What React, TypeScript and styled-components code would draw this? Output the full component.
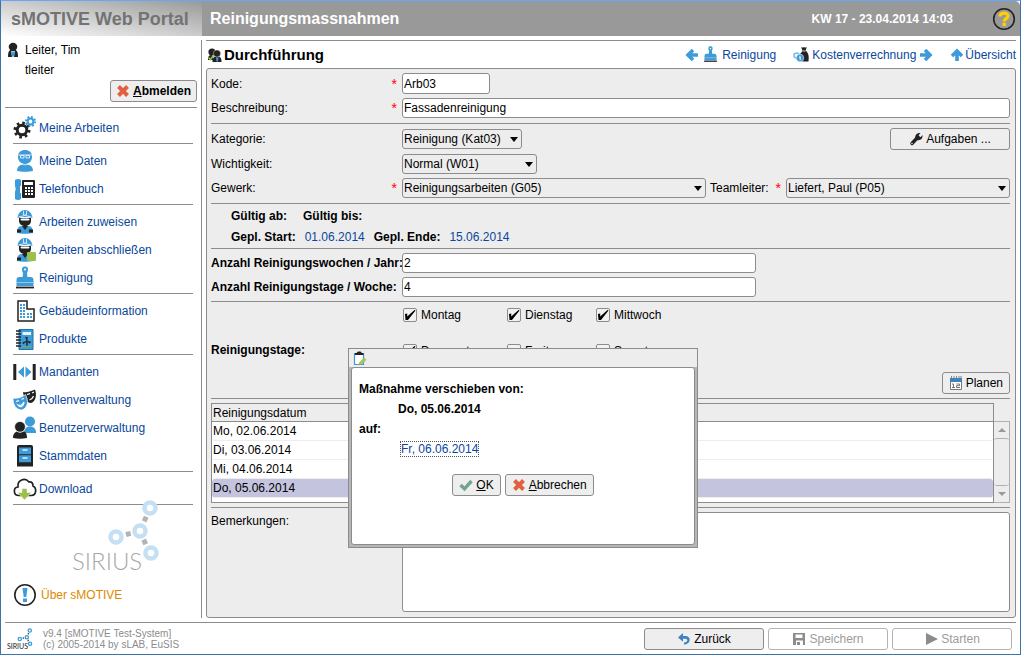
import React from "react";
import styled, { createGlobalStyle } from "styled-components";

const line = "#8c8c8c";
const blue = "#3c9bd8";
const dark = "#222222";
const linkBlue = "#0a479c";

const Global = createGlobalStyle`
  *, *::before, *::after { box-sizing: border-box; }
  body { margin: 0; background: #fff; }
  body, button, input, select, textarea {
    font-family: "Liberation Sans", Arial, sans-serif;
    font-size: 12px;
    color: #000;
  }
`;

/* ---------- shell ---------- */
const Window = styled.div`
  display: flex;
  flex-direction: column;
  min-height: 100vh;
  border: 1px solid #3b73ab;
  border-top-color: #63a8fa;
`;

const Header = styled.header`
  display: flex;
  align-items: center;
  height: 35px;
  background: #999;
  border-radius: 0 5px 0 0;
`;

const Brand = styled.div`
  width: 201px;
  height: 35px;
  padding-left: 10px;
  line-height: 36px;
  font-size: 18px;
  font-weight: bold;
  color: #737373;
  background: linear-gradient(10deg, #fff 0%, #f0f0f0 15%, #999 100%);
`;

const PageTitle = styled.h1`
  flex: 1;
  margin: 0;
  padding-left: 8px;
  font-size: 16px;
  color: #fff;
`;

const Clock = styled.div`
  margin-right: 39px;
  font-weight: bold;
  color: #fff;
`;

const HelpButton = styled.button`
  display: flex;
  margin-right: 4px;
  padding: 0;
  border: 0;
  background: none;
`;

const Body = styled.div`
  display: flex;
  flex: 1;
  padding-top: 4px;
`;

/* ---------- sidebar ---------- */
const Sidebar = styled.aside`
  display: flex;
  flex-direction: column;
  width: 201px;
  padding: 0 4px;
  border-right: 1px solid ${line};
`;

const UserBox = styled.div`
  height: 68px;
  border-bottom: 1px solid ${line};
`;

const UserRow = styled.div`
  display: flex;
  align-items: center;
  gap: 5px;
  height: 20px;
  padding-left: 2px;
  & + & { margin-bottom: -1px; }
`;

const LogoutRow = styled.div`
  display: flex;
  justify-content: flex-end;
  padding-top: 1px;
`;

const Nav = styled.nav`
  padding: 6px 4px 0 8px;
`;

const NavGroup = styled.div`
  padding-bottom: 1px;
  margin-bottom: 3px;
  border-bottom: 1px solid ${line};
`;

const NavItem = styled.a`
  display: flex;
  align-items: center;
  gap: 2px;
  height: 28px;
  color: ${linkBlue};
  text-decoration: none;
`;

const LogoArea = styled.div`
  margin: -10px 0 0 64px;
  height: 83px;
`;

const AboutLink = styled.a`
  display: flex;
  align-items: center;
  gap: 4px;
  margin: 0 0 8px 8px;
  height: 28px;
  color: #dd8800;
  text-decoration: none;
`;

/* ---------- main ---------- */
const Main = styled.main`
  display: flex;
  flex-direction: column;
  flex: 1;
  min-width: 0;
  padding: 0 4px;
`;

const TitleBar = styled.div`
  display: flex;
  align-items: center;
  height: 28px;
  border-top: 1px solid ${line};
`;

const SectionTitle = styled.h2`
  display: flex;
  align-items: center;
  gap: 2px;
  flex: 1;
  margin: 0;
  padding-left: 1px;
  font-size: 15px;
`;

const TopLink = styled.a<{ $gap?: number }>`
  display: flex;
  align-items: center;
  gap: ${(p) => p.$gap ?? 3}px;
  margin-left: 17px;
  color: ${linkBlue};
  text-decoration: none;
`;

const Panel = styled.section`
  display: flex;
  flex-direction: column;
  flex: 1;
  padding: 4px 5px 5px 4px;
  border: 1px solid ${line};
  border-radius: 3px;
  background: #ededed;
`;

const Group = styled.div<{ $pad?: number }>`
  display: flex;
  flex-direction: column;
  gap: 4px;
  padding-bottom: ${(p) => p.$pad ?? 4}px;
  margin-bottom: 4px;
  border-bottom: 1px solid ${line};
`;

const Row = styled.div`
  display: flex;
  align-items: center;
  min-height: 20px;
`;

const FieldLabel = styled.label<{ $bold?: boolean }>`
  display: flex;
  justify-content: space-between;
  align-items: center;
  flex: none;
  width: 191px;
  height: 20px;
  padding-right: 5px;
  white-space: nowrap;
  font-weight: ${(p) => (p.$bold ? "bold" : "normal")};
`;

const Required = styled.span`
  color: #f00;
  font-size: 14px;
  line-height: 14px;
`;

const TeamLabel = styled.label`
  display: flex;
  justify-content: space-between;
  align-items: center;
  flex: none;
  width: 80px;
  height: 20px;
  padding: 0 5px 0 4px;
`;

const TextInput = styled.input<{ $width?: string; $tall?: boolean }>`
  width: ${(p) => p.$width ?? "100%"};
  height: ${(p) => (p.$tall ? 21 : 20)}px;
  padding: 0 1px;
  border: 1px solid ${line};
  border-radius: 3px;
  background: #fff;
`;

const SelectBox = styled.span<{ $width?: number; $grow?: number }>`
  position: relative;
  flex: ${(p) => (p.$grow ? `${p.$grow} 1 0` : "none")};
  width: ${(p) => (p.$width ? `${p.$width}px` : "auto")};
  height: 20px;
  &::after {
    content: "";
    position: absolute;
    right: 4px;
    top: 8px;
    border: 4px solid transparent;
    border-top: 5px solid #000;
    border-bottom: 0;
    pointer-events: none;
  }
  select {
    appearance: none;
    width: 100%;
    height: 20px;
    padding: 0 1px;
    border: 1px solid ${line};
    border-radius: 3px;
    background: #ededed;
  }
`;

const Button = styled.button<{ $width?: number; $bold?: boolean; $gap?: number }>`
  display: inline-flex;
  align-items: center;
  justify-content: center;
  gap: ${(p) => p.$gap ?? 3}px;
  width: ${(p) => (p.$width ? `${p.$width}px` : "auto")};
  height: 22px;
  padding: 0 ${(p) => (p.$bold ? 5 : 6)}px;
  border: 1px solid ${line};
  border-radius: 3px;
  background: #eee;
  font-weight: ${(p) => (p.$bold ? "bold" : "normal")};
  white-space: nowrap;
  &:disabled {
    border-color: #b4b4b4;
    background: #fff;
    color: #9c9c9c;
  }
`;

const Spacer = styled.div`
  flex: 1;
`;

const Dates = styled.div`
  display: flex;
  flex-direction: column;
  gap: 1px;
  margin-top: -2px;
  padding-left: 20px;
`;

const DateLine = styled.div<{ $gap: number }>`
  display: flex;
  gap: ${(p) => p.$gap}px;
  height: 20px;
  line-height: 20px;
  font-weight: bold;
`;

const DateLink = styled.a`
  color: ${linkBlue};
  font-weight: normal;
  text-decoration: none;
`;

const DaysRow = styled.div`
  display: flex;
  align-items: center;
  height: 88px;
`;

const Days = styled.div`
  display: grid;
  grid-template-columns: 104px 89px auto;
  row-gap: 22px;
  align-self: flex-start;
  padding-top: 2px;
`;

const DayLabel = styled.label`
  display: flex;
  align-items: center;
  gap: 4px;
  height: 14px;
  padding-left: 1px;
`;

const Check = styled.input`
  appearance: none;
  width: 14px;
  height: 14px;
  margin: 0;
  border: 1px solid ${line};
  border-radius: 2px;
  background: #f2f2f2;
  &:checked {
    background: #f2f2f2
      url("data:image/svg+xml,%3Csvg xmlns='http://www.w3.org/2000/svg' viewBox='0 0 12 12'%3E%3Cpath d='M1 5L3.200 4.500v3L10.500 1l1 .6L4 11H1.500z' fill='black'/%3E%3C/svg%3E");
  }
`;

const PlanCell = styled.div`
  display: flex;
  align-self: flex-end;
  margin-left: auto;
`;

const TableArea = styled.div`
  display: flex;
  height: 100px;
`;

const TableFrame = styled.div`
  flex: 1;
  border: 1px solid ${line};
  background: #fff;
`;

const Table = styled.table`
  width: 100%;
  border-collapse: separate;
  border-spacing: 0;
  th {
    height: 18px;
    padding: 0 1px;
    text-align: left;
    font-weight: normal;
    background: #ededed;
    border-bottom: 1px solid ${line};
  }
  td {
    height: 19px;
    padding: 0 1px;
    border-bottom: 1px solid #ededed;
  }
`;

const DataRow = styled.tr<{ $selected?: boolean }>`
  td {
    background: ${(p) => (p.$selected ? "#c5c4de" : "#fff")};
    border-radius: 3px;
  }
`;

const Scroll = styled.div`
  display: flex;
  flex-direction: column;
  justify-content: space-between;
  width: 16px;
  height: 82px;
  margin-top: 18px;
  border: 1px solid #b0b0b0;
  border-left: 0;
`;

const ScrollButton = styled.button<{ $down?: boolean }>`
  height: 16px;
  padding: 0;
  border: 0;
  background: none;
  &::after {
    content: "";
    display: block;
    width: 8px;
    margin: 0 auto;
    border: 4px solid transparent;
    border-top-width: ${(p) => (p.$down ? 4 : 0)}px;
    border-bottom-width: ${(p) => (p.$down ? 0 : 4)}px;
    border-top-color: #999;
    border-bottom-color: #999;
  }
`;

const Thumb = styled.div`
  flex: 1;
  border: solid #b0b0b0;
  border-width: 1px 0;
  border-radius: 3px;
`;

const NotesRow = styled.div`
  display: flex;
  flex: 1;
  label {
    width: 191px;
    padding-top: 2px;
  }
  textarea {
    flex: 1;
    min-height: 100px;
    border: 1px solid ${line};
    border-radius: 3px;
    resize: none;
  }
`;

/* ---------- footer ---------- */
const Footer = styled.footer`
  display: flex;
  align-items: center;
  gap: 4px;
  margin: 4px 4px 0;
  padding: 0 4px 0 1px;
  height: 32px;
  border-top: 1px solid ${line};
`;

const Version = styled.div`
  flex: 1;
  padding-left: 6px;
  font-size: 10px;
  line-height: 11px;
  color: #8c8c8c;
`;

/* ---------- dialog ---------- */
const Dialog = styled.dialog`
  position: absolute;
  left: 348px;
  top: 348px;
  width: 350px;
  margin: 0;
  padding: 0;
  color: #000;
  border: 1px solid ${line};
  background: #b6b6b6;
`;

const DialogTitle = styled.div`
  height: 18px;
  padding: 2px 4px;
  background: #ededed;
`;

const DialogBody = styled.div`
  height: 178px;
  margin: 0 2px 2px;
  padding: 11px 7px;
  border: 1px solid ${line};
  border-radius: 3px;
  background: #fff;
  font-weight: bold;
  line-height: 20px;
`;

const Indent = styled.div`
  padding-left: 39px;
`;

const FocusLink = styled.a`
  margin-left: 3px;
  outline: 1px dotted #555;
  color: ${linkBlue};
  font-weight: normal;
  line-height: 14px;
  text-decoration: none;
`;

const DialogButtons = styled.div`
  display: flex;
  justify-content: center;
  gap: 4px;
  margin-top: 15px;
`;

/* ---------- icons ---------- */
type SvgProps = { w?: number; h?: number; box?: string; children?: React.ReactNode };

const Svg = ({ w = 24, h = 24, box, children }: SvgProps) => (
  <svg width={w} height={h} viewBox={box ?? `0 0 ${w} ${h}`} fill="none" aria-hidden="true">
    {children}
  </svg>
);

const Gears = () => (
  <Svg>
    <circle cx="9" cy="14" r="4.8" stroke={dark} strokeWidth="3" />
    <circle cx="9" cy="14" r="7.1" stroke={dark} strokeWidth="2.8" strokeDasharray="2.6 2.98" />
    <circle cx="17.5" cy="5.5" r="2.9" stroke={blue} strokeWidth="2" />
    <circle cx="17.5" cy="5.5" r="4.6" stroke={blue} strokeWidth="2" strokeDasharray="1.8 1.81" />
  </Svg>
);

const PersonData = () => (
  <Svg>
    <path d="M5 8c0-5 3-7 7-7s7 2 7 7c0 4-3 7-7 7s-7-3-7-7z" fill={blue} />
    <path d="M4 22c0-5 4-7 8-7s8 2 8 7c-4 1-12 1-16 0z" fill={blue} />
    <path d="M5.500 6h13M7.500 6.500h3.500V9H7.500zM13 6.500h3.500V9H13z" stroke="#dceefa" strokeWidth="1" />
    <path d="M6 13.500c3 3 9 3 12 0" stroke="#fff" strokeWidth=".8" />
  </Svg>
);

const Phone = () => (
  <Svg>
    <path d="M2 3q3-2 6 0v6H7v7h1v6q-3 2-6 0V15q1.500-3 0-6z" fill={blue} />
    <rect x="9" y="3" width="13" height="18" rx="1" fill={dark} />
    <rect x="11" y="5" width="9" height="3" fill="#fff" />
    <path d="M12 11h2m1 0h2m1 0h2M12 14h2m1 0h2m1 0h2M12 17h2m1 0h2m1 0h2" stroke="#fff" strokeWidth="2" />
  </Svg>
);

const Worker = ({ done }: { done?: boolean }) => (
  <Svg>
    <path d="M6 8h12v3c0 3-3 5-6 5s-6-2-6-5z" fill={dark} />
    <path d="M4.500 8C5 3 8 0 12 0s7 3 7.500 8c-4-1.500-11-1.500-15 0z" fill={blue} />
    <path d="M10.500 1v4h3V1M5.500 7q6.500-3 13 0" stroke="#cfe8f8" strokeWidth="1" />
    <rect x="7.500" y="8.500" width="9" height="2" rx="1" fill="#fff" />
    <path d="M4 23c0-4 1-7 5-7l3 2 3-2c4 0 5 3 5 7-4 1-12 1-16 0z" fill={blue} />
    <path d="M9 16l3 4 3-4M4 19.500h4v3H4zM16 19.500h4v3h-4z" fill={dark} />
    {done && <rect x="14" y="14" width="9" height="9" rx="1" fill="#9cc14b" />}
  </Svg>
);

const Brush = ({ size = 24 }: { size?: number }) => (
  <Svg w={size} h={size} box="0 0 24 24">
    <path d="M9.500 12L10 7C8 3 9 .5 12 .5S16 3 14 7l.5 5z" fill={blue} />
    <path d="M3.500 20v-6q0-3 3-3h11q3 0 3 3v6z" fill={blue} />
    <circle cx="12" cy="3.500" r="1" fill="#fff" />
    <path d="M3.500 16.500h17" stroke="#a8d4ef" strokeWidth=".8" />
    <path d="M3 21.500h18" stroke={dark} strokeWidth="1.800" />
  </Svg>
);

const Building = () => (
  <Svg>
    <path d="M5 22V2h9v8h7v12H5z" fill="#fff" stroke={dark} strokeWidth="1.500" />
    <path d="M7 6h2m1 0h2M7 9h2m1 0h2M7 12h2m1 0h2M7 15h2m1 0h2m2 0h2m1 0h2M7 18h2m1 0h2m2 0h2m1 0h2" stroke={blue} strokeWidth="2" />
  </Svg>
);

const Book = () => (
  <Svg>
    <path d="M6 2.500h14v20H6z" fill={blue} stroke="#2373a8" />
    <path d="M3 4h5M3 7h5M3 10h5M3 13h5M3 16h5M3 19h5" stroke={dark} strokeWidth="1.500" />
    <rect x="9.500" y="5" width="8.500" height="3" fill="#e5f3fb" />
    <path d="M14 14l-1.500-4 2 .5zM14 14l4 1-1.500 1.200zM14 14l-4 3v-1.500zM13.500 14h1v4.500h-1z" fill={dark} stroke={dark} strokeWidth=".5" />
    <path d="M9 19.500h9" stroke="#78b043" />
  </Svg>
);

const Clients = () => (
  <Svg>
    <path d="M1.800 4v16M21.200 4v16" stroke={dark} strokeWidth="3" />
    <path d="M11 6.500v11L5 12zM12.500 6.500v11l6-5.500z" fill={blue} />
  </Svg>
);

const Masks = () => (
  <Svg>
    <path d="M10 4c4 1 8-1 12-2.500 2 5 1 12-4 13.500-4 0-7-4-8-11z" fill={dark} />
    <path d="M14 6.500l3-.8M19 5l2-1M16.500 12q3-1 4-4" stroke="#fff" strokeWidth="1.200" />
    <path d="M0 10c5 1 9-1 12.500-3.500 3 6 3 13-3.500 15.500C3 22 0 17 0 10z" fill={blue} stroke="#fff" strokeWidth=".7" />
    <path d="M3 13.500l3-.8M8.500 11.500l2.500-1.200M5 17c2 1 5 0 6-3-.5 5-4 6-6 3z" stroke="#fff" strokeWidth="1.200" />
  </Svg>
);

const Users = () => (
  <Svg>
    <circle cx="17" cy="5.500" r="5" fill={blue} />
    <path d="M11 17c0-4 2-6.500 6-6.500s6 2.500 6 6.500z" fill={blue} />
    <path d="M0 22c0-4 2-6 4-6.500q3 2 6 0c3 0 4 2.500 4 6.500q-7 1.500-14 0z" fill={dark} />
    <circle cx="7" cy="10.800" r="5.400" fill={dark} stroke="#fff" strokeWidth=".7" />
  </Svg>
);

const Cabinet = () => (
  <Svg>
    <path d="M4 3q0-2 2-2h12q2 0 2 2v19.500H4z" fill={dark} />
    <path d="M6 3.500h12v6.800H6zM6 11.300h12v7H6z" fill={blue} />
    <path d="M9.500 6h5M9.500 14h5" stroke="#e5f3fb" strokeWidth="1.500" />
  </Svg>
);

const Cloud = () => (
  <Svg>
    <path d="M6 18.500c-6 0-6-8-1-8.500-1-7 7-10 11-5 3-.5 4 1.500 4 4 4 2 3.500 9-1.500 9.500z" fill="#fff" stroke={dark} strokeWidth="1.700" />
    <path d="M9 11.500h5V15.500h4.500L11.500 23l-7-7.500H9z" fill="#9cc14b" stroke="#fff" strokeWidth=".5" />
  </Svg>
);

const About = () => (
  <Svg>
    <circle cx="12" cy="12" r="10.200" stroke={dark} strokeWidth="1.600" />
    <path d="M9.500 5h5l-1.200 9h-2.600z" fill={blue} />
    <rect x="10" y="15.500" width="4" height="3.500" fill={blue} />
  </Svg>
);

const Person = () => (
  <Svg w={13} h={16}>
    <ellipse cx="6" cy="4.800" rx="4.300" ry="4" fill={dark} />
    <path d="M1 15c0-5 1-7 3-7h4c2 0 3 2 3 7z" fill={dark} />
    <path d="M4 9h4l-1 6H5z" fill="#8bcdf2" />
    <path d="M5 10h2l.3 4H4.700z" fill={blue} />
  </Svg>
);

const People = () => (
  <Svg w={15} h={14}>
    <circle cx="5" cy="4" r="3.600" fill={dark} />
    <path d="M1 12c0-4 1-5 4-5l2 5z" fill={dark} />
    <path d="M5.500 14c0-4 1-5.500 4.500-5.500s4.500 1.500 4.500 5.500z" fill={dark} />
    <circle cx="10" cy="5.500" r="3.600" fill={dark} stroke="#fff" strokeWidth=".4" />
    <path d="M1.500 9.500l2 2 3-4" stroke="#9cc14b" strokeWidth="1.500" />
    <path d="M9 9.500h2.500l-.5 4H9.500z" fill={blue} />
  </Svg>
);

const Arrow = ({ turn = 0 }: { turn?: number }) => (
  <Svg w={14} h={14}>
    <path transform={`rotate(${turn} 7 7)`} d="M13 7H4M8 2L3 7l5 5" stroke={blue} strokeWidth="3.600" />
  </Svg>
);

const Money = () => (
  <Svg w={16} h={16}>
    <path d="M8 0q1.500 1 3 0 1.500 1 3 0l-1.500 3.500C16 6 16 10 15.500 14.500H9V8L7 7c1-1 2-2 2.500-3.500z" fill={dark} />
    <path d="M9.500 4h3" stroke="#fff" strokeWidth=".8" />
    <circle cx="3.500" cy="8.500" r="2.500" stroke="#7dbce6" strokeWidth="1.600" />
    <circle cx="7" cy="11" r="3.800" fill={blue} stroke="#fff" strokeWidth=".5" />
    <path d="M6 10.500l1.200-1v3.500" stroke="#fff" />
  </Svg>
);

const Help = () => (
  <svg width="24" height="24" viewBox="0 0 24 24" aria-label="Hilfe">
    <circle cx="12" cy="12" r="10.300" fill="none" stroke={dark} strokeWidth="1.600" />
    <path d="M8 9.500c0-4.500 8-4.500 8-.5 0 2.800-3.800 2.500-3.800 5.500" fill="none" stroke="#ffcf00" strokeWidth="3.200" />
    <rect x="10.500" y="15.700" width="3.500" height="3.300" fill="#ffcf00" />
  </svg>
);

const Cross = () => (
  <Svg w={14} h={14}>
    <path d="M2.500 2.500l9 9M11.500 2.500l-9 9" stroke="#e0603f" strokeWidth="4" />
  </Svg>
);

const Tick = () => (
  <Svg w={14} h={14}>
    <path d="M1.500 7l4 3.800L12.500 3" stroke="#72a590" strokeWidth="3.400" />
  </Svg>
);

const Wrench = () => (
  <Svg w={14} h={14}>
    <path d="M3 11.500L9 5" stroke={dark} strokeWidth="3.400" strokeLinecap="round" />
    <path d="M6.500 6.500C5.500 3 8 .5 11.500 1L9.500 3.200l.5 1.500 1.800.3L13.500 3c.5 3.500-2 6-5.500 5z" fill={dark} />
    <circle cx="3" cy="11.500" r=".7" fill="#fff" />
  </Svg>
);

const Calendar = () => (
  <Svg w={14} h={14}>
    <path d="M1.500 3v10.500h11V3z" fill="#fff" stroke="#777" />
    <path d="M1 2h12v4H1z" fill="#3f82c0" />
    <path d="M2.500 0v3M5 0v3M7.500 0v3M10 0v3M12 0v3" stroke="#777" strokeWidth=".9" />
    <path d="M3 8h1.500v3.500M3 11.500h3M7.500 8h3v1.700h-3v1.800H11" stroke="#666" strokeWidth=".9" />
  </Svg>
);

const Back = () => (
  <Svg w={14} h={14}>
    <path d="M6 1v3h2.500C14.500 4 14 12.500 7 12.500v-2c4 0 4.500-3.700 1-3.700H6v3L1 5.500z" fill="#3f82c0" />
  </Svg>
);

const Disk = () => (
  <Svg w={14} h={14}>
    <path fillRule="evenodd" d="M1 1h12v12h-2V8.500H4V13H1zM3.500 2.500v3.500h7V2.500z" fill="#8c8c8c" />
    <path d="M5 10h3v3H5z" fill="#8c8c8c" />
  </Svg>
);

const Play = () => (
  <Svg w={14} h={14}>
    <path d="M2 1l12 6-12 6z" fill="#8c8c8c" />
  </Svg>
);

const ClipboardEdit = () => (
  <Svg w={14} h={15}>
    <path d="M1.500 2.500h9v11h-9z" fill="#fff" stroke={blue} strokeWidth="1.200" />
    <path d="M2 4V2h1.500L5 .5h2.500L9 2h1.500v2z" fill={dark} />
    <path d="M6 13.500l.5-2L11 7l2 1.800-4.500 4.500z" fill="#a7c95b" stroke="#8aae3e" strokeWidth=".5" />
  </Svg>
);

const Sirius = ({ small }: { small?: boolean }) => (
  <svg width={small ? 27 : 92} height={small ? 24 : 78} viewBox="0 0 92 78" aria-hidden="true">
    <path d="M53 37.500l12-3M73.500 27l5-11M73 38l5 11" stroke={small ? "#555" : "#b4b4b4"} strokeWidth="5" strokeDasharray="5 20" strokeDashoffset="-4" />
    <g fill="#fff" stroke={small ? blue : "#c5e0f4"} strokeWidth="4.500">
      <circle cx="47" cy="39" r="5.500" />
      <circle cx="71" cy="33" r="5.500" />
      <circle cx="81" cy="10" r="5.500" />
      <circle cx="82" cy="55" r="5.500" />
    </g>
    <text x="3" y="72" fontFamily="Lato, sans-serif" fontWeight={small ? 400 : 300} fontSize="24" fill={small ? dark : "#a8a8a8"}>
      SIRIUS
    </text>
  </svg>
);

const navGroups: { label: string; icon: React.ReactNode }[][] = [
  [{ label: "Meine Arbeiten", icon: <Gears /> }],
  [
    { label: "Meine Daten", icon: <PersonData /> },
    { label: "Telefonbuch", icon: <Phone /> },
  ],
  [
    { label: "Arbeiten zuweisen", icon: <Worker /> },
    { label: "Arbeiten abschließen", icon: <Worker done /> },
    { label: "Reinigung", icon: <Brush /> },
  ],
  [
    { label: "Gebäudeinformation", icon: <Building /> },
    { label: "Produkte", icon: <Book /> },
  ],
  [
    { label: "Mandanten", icon: <Clients /> },
    { label: "Rollenverwaltung", icon: <Masks /> },
    { label: "Benutzerverwaltung", icon: <Users /> },
    { label: "Stammdaten", icon: <Cabinet /> },
  ],
  [{ label: "Download", icon: <Cloud /> }],
];

const days = [
  { name: "Montag", on: true },
  { name: "Dienstag", on: true },
  { name: "Mittwoch", on: true },
  { name: "Donnerstag", on: true },
  { name: "Freitag", on: false },
  { name: "Samstag", on: false },
];

const dates = ["Mo, 02.06.2014", "Di, 03.06.2014", "Mi, 04.06.2014", "Do, 05.06.2014"];

export default function App() {
  return (
    <>
      <Global />
      <Window>
        <Header>
          <Brand>sMOTIVE Web Portal</Brand>
          <PageTitle>Reinigungsmassnahmen</PageTitle>
          <Clock>KW 17 - 23.04.2014 14:03</Clock>
          <HelpButton type="button"><Help /></HelpButton>
        </Header>
        <Body>
          <Sidebar>
            <UserBox>
              <UserRow><Person />Leiter, Tim</UserRow>
              <UserRow><Svg w={13} h={16} />tleiter</UserRow>
              <LogoutRow>
                <Button type="button" $bold><Cross /><span><u>A</u>bmelden</span></Button>
              </LogoutRow>
            </UserBox>
            <Nav>
              {navGroups.map((group, i) => (
                <NavGroup key={i}>
                  {group.map((item) => (
                    <NavItem href="#" key={item.label}>{item.icon}{item.label}</NavItem>
                  ))}
                </NavGroup>
              ))}
            </Nav>
            <LogoArea><Sirius /></LogoArea>
            <AboutLink href="#"><About />Über sMOTIVE</AboutLink>
          </Sidebar>
          <Main>
            <TitleBar>
              <SectionTitle><People />Durchführung</SectionTitle>
              <TopLink href="#"><Arrow /><Brush size={17} />Reinigung</TopLink>
              <TopLink href="#"><Money />Kostenverrechnung<Arrow turn={180} /></TopLink>
              <TopLink href="#" $gap={1}><Arrow turn={90} />Übersicht</TopLink>
            </TitleBar>
            <Panel>
              <Group $pad={5}>
                <Row>
                  <FieldLabel htmlFor="kode">Kode:<Required>*</Required></FieldLabel>
                  <TextInput id="kode" defaultValue="Arb03" $width="88px" $tall />
                </Row>
                <Row>
                  <FieldLabel htmlFor="beschreibung">Beschreibung:<Required>*</Required></FieldLabel>
                  <TextInput id="beschreibung" defaultValue="Fassadenreinigung" />
                </Row>
              </Group>
              <Group $pad={5}>
                <Row>
                  <FieldLabel htmlFor="kategorie">Kategorie:</FieldLabel>
                  <SelectBox $width={120}>
                    <select id="kategorie"><option>Reinigung (Kat03)</option></select>
                  </SelectBox>
                  <Spacer />
                  <Button type="button" $width={120}><Wrench />Aufgaben ...</Button>
                </Row>
                <Row>
                  <FieldLabel htmlFor="wichtigkeit">Wichtigkeit:</FieldLabel>
                  <SelectBox $width={135}>
                    <select id="wichtigkeit"><option>Normal (W01)</option></select>
                  </SelectBox>
                </Row>
                <Row>
                  <FieldLabel htmlFor="gewerk">Gewerk:<Required>*</Required></FieldLabel>
                  <SelectBox $grow={304}>
                    <select id="gewerk"><option>Reinigungsarbeiten (G05)</option></select>
                  </SelectBox>
                  <TeamLabel htmlFor="teamleiter">Teamleiter:<Required>*</Required></TeamLabel>
                  <SelectBox $grow={224}>
                    <select id="teamleiter"><option>Liefert, Paul (P05)</option></select>
                  </SelectBox>
                </Row>
              </Group>
              <Group $pad={1}>
                <Dates>
                  <DateLine $gap={16}><span>Gültig ab:</span><span>Gültig bis:</span></DateLine>
                  <DateLine $gap={9}>
                    <span>Gepl. Start:</span><DateLink href="#">01.06.2014</DateLink>
                    <span>Gepl. Ende:</span><DateLink href="#">15.06.2014</DateLink>
                  </DateLine>
                </Dates>
              </Group>
              <Group>
                <Row>
                  <FieldLabel htmlFor="wochen" $bold>Anzahl Reinigungswochen / Jahr:</FieldLabel>
                  <TextInput id="wochen" defaultValue="2" $width="354px" />
                </Row>
                <Row>
                  <FieldLabel htmlFor="tage" $bold>Anzahl Reinigungstage / Woche:</FieldLabel>
                  <TextInput id="tage" defaultValue="4" $width="354px" />
                </Row>
              </Group>
              <Group>
                <DaysRow>
                  <FieldLabel as="div" $bold>Reinigungstage:</FieldLabel>
                  <Days>
                    {days.map((d) => (
                      <DayLabel key={d.name}>
                        <Check type="checkbox" defaultChecked={d.on} />
                        {d.name}
                      </DayLabel>
                    ))}
                  </Days>
                  <PlanCell>
                    <Button type="button"><Calendar />Planen</Button>
                  </PlanCell>
                </DaysRow>
              </Group>
              <Group>
                <TableArea>
                  <TableFrame>
                    <Table>
                      <thead><tr><th>Reinigungsdatum</th></tr></thead>
                      <tbody>
                        {dates.map((d, i) => (
                          <DataRow key={d} $selected={i === 3}><td>{d}</td></DataRow>
                        ))}
                      </tbody>
                    </Table>
                  </TableFrame>
                  <Scroll>
                    <ScrollButton type="button" aria-label="Nach oben" />
                    <Thumb />
                    <ScrollButton type="button" aria-label="Nach unten" $down />
                  </Scroll>
                </TableArea>
              </Group>
              <NotesRow>
                <label htmlFor="bemerkungen">Bemerkungen:</label>
                <textarea id="bemerkungen" />
              </NotesRow>
            </Panel>
          </Main>
        </Body>
        <Footer>
          <Sirius small />
          <Version>v9.4 [sMOTIVE Test-System]<br />(c) 2005-2014 by sLAB, EuSIS</Version>
          <Button type="button" $width={120}><Back />Zurück</Button>
          <Button type="button" $width={120} disabled><Disk />Speichern</Button>
          <Button type="button" $width={120} disabled><Play />Starten</Button>
        </Footer>
      </Window>
      <Dialog open>
        <DialogTitle><ClipboardEdit /></DialogTitle>
        <DialogBody>
          Maßnahme verschieben von:
          <Indent>Do, 05.06.2014</Indent>
          auf:
          <Indent><FocusLink href="#">Fr, 06.06.2014</FocusLink></Indent>
          <DialogButtons>
            <Button type="button"><Tick /><span><u>O</u>K</span></Button>
            <Button type="button"><Cross /><span><u>A</u>bbrechen</span></Button>
          </DialogButtons>
        </DialogBody>
      </Dialog>
    </>
  );
}
